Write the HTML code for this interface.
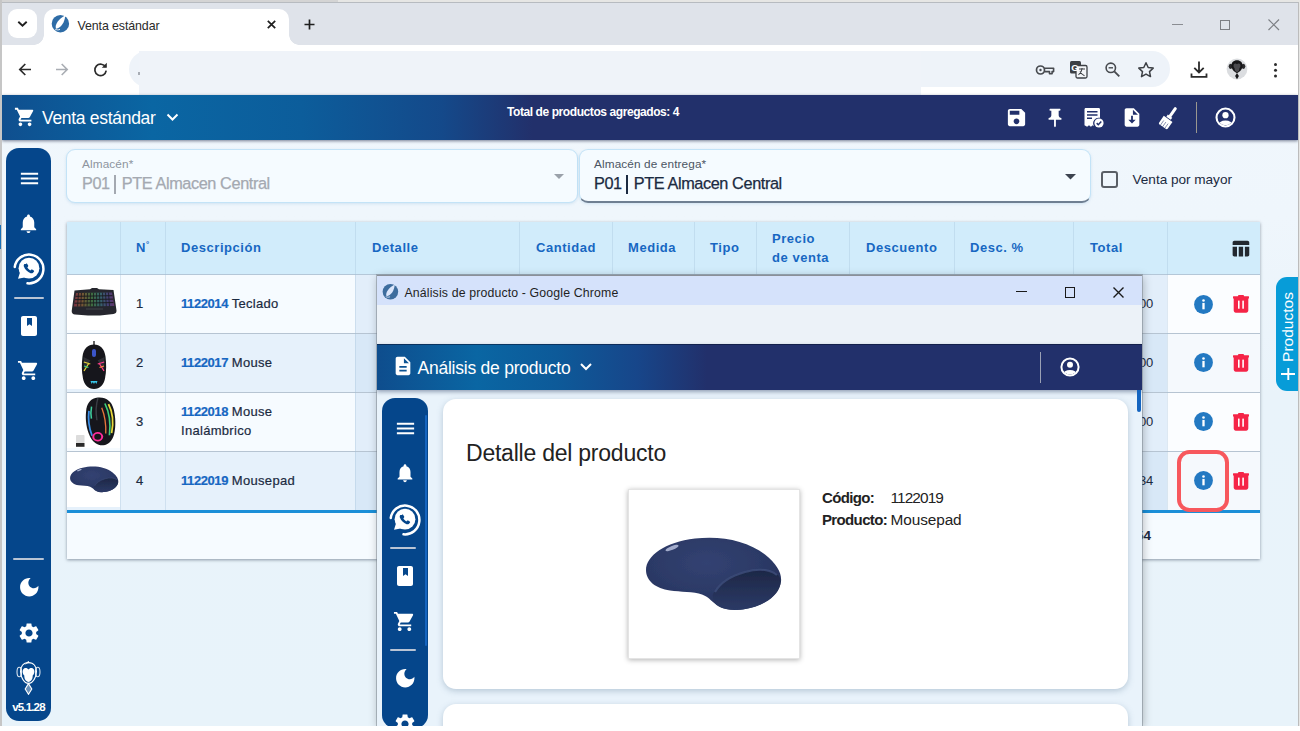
<!DOCTYPE html>
<html lang="es">
<head>
<meta charset="utf-8">
<title>Venta estándar</title>
<style>
*{box-sizing:border-box;margin:0;padding:0}
html,body{width:1300px;height:731px;overflow:hidden;background:#fff}
body{font-family:"Liberation Sans",sans-serif;position:relative;color:#1b2a41}
.abs{position:absolute}
svg{display:block;position:absolute}
#frame{left:0;top:0;width:1300px;height:731px;background:#fff}
#frameL{left:0;top:0;width:2px;height:726px;background:#c6c6c6}
#frameT{left:0;top:0;width:1300px;height:3.5px;background:linear-gradient(#e6e6e4 0,#e6e6e4 1.9px,#b7bbc0 2.1px,#b7bbc0 100%)}
#frameR{left:1297.6px;top:2px;width:2px;height:724px;background:linear-gradient(90deg,#bcbcbc 0,#bcbcbc 1.4px,#e6e6e4 1.5px)}
/* chrome */
#tabbar{left:2px;top:3px;width:1296px;height:42px;background:#dfe3ea}
#tabsearch{left:8px;top:9px;width:29px;height:29px;border-radius:9px;background:#fff}
#tab{left:44px;top:9px;width:245px;height:36px;background:#fff;border-radius:10px 10px 0 0}
#tab:before,#tab:after{content:"";position:absolute;bottom:0;width:10px;height:10px;background:radial-gradient(circle at 0 0,transparent 9.5px,#fff 10px)}
#tab:before{left:-10px}
#tab:after{right:-10px;background:radial-gradient(circle at 100% 0,transparent 9.5px,#fff 10px)}
#tabtitle{left:77.5px;top:18.5px;font-size:12.4px;color:#2a2a2a;white-space:nowrap;letter-spacing:-0.1px}
#toolbar{left:2px;top:45px;width:1296px;height:50px;background:#fff;border-radius:9px 9px 0 0}
#omni{left:129px;top:51px;width:1041px;height:36px;border-radius:18px;background:#eef3f9}
#redact{left:139px;top:51px;width:782px;height:44px;background:#eff3f9}
/* app */
#app{left:2px;top:95px;width:1296px;height:631px;background:linear-gradient(180deg,#f0f7fc 0,#eff6fc 120px,#e9f3fa 300px,#e8f3fa 100%);overflow:hidden}
#hdr{left:2px;top:95px;width:1296px;height:45px;background:linear-gradient(90deg,#0f4f8f 0px,#0a66a3 150px,#0c5d9b 300px,#14498a 440px,#22306b 530px,#22306b 100%);box-shadow:0 1px 3px rgba(15,25,60,.55)}
#hdrtitle{left:42px;top:107.9px;font-size:17.5px;color:#fff;white-space:nowrap;letter-spacing:-0.3px}
#hdrtotal{left:507px;top:104.5px;font-size:12px;font-weight:bold;color:#fff;white-space:nowrap;letter-spacing:-0.42px}
.side{background:#05468b;border-radius:13px}
#side1{left:6px;top:148px;width:45px;height:573px}
.sdiv{height:2px;background:#b9c4d4;border-radius:1px}
#ver{left:6px;top:701px;width:45px;text-align:center;font-size:11.5px;font-weight:bold;color:#fff;letter-spacing:-0.85px}
/* selects */
.sel{background:#f5fbff;border:1px solid #c3e3f7;border-radius:9px;box-shadow:0 1px 3px rgba(120,170,210,.25)}
#sel1{left:66px;top:149px;width:512px;height:54px}
#sel2{left:579px;top:149px;width:512px;height:54px;border-bottom:2px solid #6f7f92}
.lab{font-size:11.8px;white-space:nowrap;letter-spacing:0.11px}
.val{font-size:16.3px;white-space:nowrap;letter-spacing:-0.4px;-webkit-text-stroke:0.25px currentColor}
#chk{left:1101px;top:171px;width:17px;height:17px;border:2px solid #5a5f66;border-radius:3px}
#chklab{left:1132.5px;top:172px;font-size:13.6px;color:#1b2a41;white-space:nowrap;letter-spacing:-0.02px}
/* table */
#tbl{left:67px;top:222px;width:1193px;height:337px;background:#f6fbff;box-shadow:0 1px 3px rgba(60,75,95,.55)}
#thead{left:0;top:0;width:1193px;height:53px;background:#d1ecfb;border-bottom:1px solid #b4c7d8}
.th{position:absolute;font-weight:bold;color:#1767c2;font-size:13px;letter-spacing:0.55px;white-space:nowrap;line-height:19px}
.vd{position:absolute;top:0;width:1px;height:288px;background:rgba(160,190,215,.32)}
.row{position:absolute;left:0;width:1193px;height:59px;border-bottom:1px solid #b6c4d2}
.act{position:absolute;left:1100px;top:0;width:93px;height:58px;background:rgba(255,255,255,.58)}
.row.alt{background:#e6f1fb}
.det{position:absolute;left:288px;top:0;width:812px;height:58px;background:rgba(190,215,240,.35)}
.imgc{position:absolute;left:0;top:0px;width:53px;height:55px;background:#fff}
.num{position:absolute;left:69px;font-size:13px;color:#1b2a41;-webkit-text-stroke:0.2px currentColor}
.desc{position:absolute;left:114px;font-size:13px;color:#1b2a41;white-space:nowrap;line-height:19px;letter-spacing:0.3px;-webkit-text-stroke:0.2px currentColor}
.desc b{color:#1767c2;letter-spacing:-0.42px}
.tot{position:absolute;left:1072px;font-size:13px;color:#1b2a41;letter-spacing:-0.2px}
#blueline{left:0;top:288px;width:1193px;height:3px;background:#1b8fd8}
#prodtab{left:1276px;top:277px;width:24px;height:114.400px;background:#079cd8;border-radius:11px 0 0 11px}
#prodtxt{left:1198.2px;top:317.2px;width:180px;height:20px;line-height:20px;text-align:center;transform:rotate(-90deg);color:#fff;font-size:15.5px;white-space:nowrap}
#hl{left:1176.5px;top:450px;width:52.8px;height:61.7px;border:4.3px solid #f7585d;border-radius:12.5px}
</style>
</head>
<body>
<div id="frame" class="abs"></div>
<div id="frameT" class="abs"></div>
<div class="abs" style="left:0;top:0;width:338px;height:2px;background:#d4d4d4"></div>
<!-- ===== browser chrome ===== -->
<div id="tabbar" class="abs"></div>
<div id="tabsearch" class="abs"></div>
<div id="tab" class="abs"></div>
<div id="tabtitle" class="abs">Venta estándar</div>
<div id="toolbar" class="abs"></div>
<div id="omni" class="abs"></div>
<div id="redact" class="abs"></div>
<svg style="left:17px;top:20px" width="11" height="8" viewBox="0 0 11 8"><path d="M1.300 1.800l4.200 4 4.200-4" stroke="#1f1f1f" stroke-width="1.900" fill="none"/></svg>
<!-- favicon -->
<svg style="left:51px;top:14px" width="19" height="19" viewBox="0 0 19 19"><circle cx="9.400" cy="9.700" r="8.700" fill="#2e6ca6"/><g transform="translate(9.600 8.600) rotate(-50.500)"><path fill="#fff" d="M-7.600 .5C-6-3.500 2-3.700 8.300-.9 3 3.100-4 3.900-7.600 .5z"/></g><path d="M4.200 15.200c1.500.8 3.200.9 4.800.2" stroke="#fff" stroke-width=".9" fill="none"/></svg>
<svg style="left:267px;top:20px" width="9" height="9" viewBox="0 0 9 9"><path d="M.8.800l7.400 7.400M8.200.8L.8 8.200" stroke="#1f1f1f" stroke-width="1.700" fill="none"/></svg>
<svg style="left:304px;top:19px" width="11" height="11" viewBox="0 0 11 11"><path d="M5.500.5v10M.5 5.500h10" stroke="#1f1f1f" stroke-width="1.700" fill="none"/></svg>
<!-- window controls -->
<div class="abs" style="left:1172px;top:23.500px;width:10.500px;height:1.200px;background:#8a8d92"></div>
<div class="abs" style="left:1219.500px;top:19.500px;width:10.500px;height:10.500px;border:1.200px solid #7c7f84"></div>
<svg style="left:1268px;top:19px" width="11.500" height="11.500" viewBox="0 0 11.500 11.500"><path d="M.5.500l10.500 10.500M11 .5L.5 11" stroke="#7c7f84" stroke-width="1.200" fill="none"/></svg>
<!-- nav -->
<svg style="left:17px;top:61px" width="16" height="17" viewBox="0 0 16 17"><path d="M14 8.500H2.800M8.300 3l-5.500 5.500 5.500 5.500" stroke="#2b2b2b" stroke-width="1.700" fill="none"/></svg>
<svg style="left:54px;top:61px" width="16" height="17" viewBox="0 0 16 17"><path d="M2 8.500h11.200M7.700 3l5.500 5.500-5.500 5.500" stroke="#a9adb3" stroke-width="1.600" fill="none"/></svg>
<svg style="left:92px;top:61px" width="17" height="17" viewBox="0 0 17 17"><path d="M13.600 6.200A5.700 5.700 0 1 0 14.200 9.700" stroke="#2b2b2b" stroke-width="1.700" fill="none"/><path d="M14.800 1.800v5h-5z" fill="#2b2b2b"/></svg>
<div class="abs" style="left:138px;top:72px;width:2px;height:3px;background:#a8adb5"></div>
<!-- omnibox right icons -->
<svg style="left:1035px;top:62px" width="20" height="16" viewBox="0 0 20 16"><circle cx="5.500" cy="8" r="4" fill="none" stroke="#474a4f" stroke-width="1.700"/><circle cx="5.500" cy="8" r="1.200" fill="#474a4f"/><path d="M9.300 6.300h9.300v3.300h-1.500v2.200h-2.600V9.600H9.300" fill="none" stroke="#474a4f" stroke-width="1.600" stroke-linejoin="round"/></svg>
<svg style="left:1069px;top:60px" width="19" height="19" viewBox="0 0 19 19"><rect x="1" y="1" width="11" height="12.500" rx="1.500" fill="#3d4045"/><rect x="7" y="5.500" width="11" height="12.500" rx="1.500" fill="#f3f5f8" stroke="#3d4045" stroke-width="1.300"/><text x="2.300" y="10.700" font-family="Liberation Sans" font-size="9.500" font-weight="bold" fill="#fff">G</text><path d="M10 9h6M13 8v1c-.3 2.300-1.700 4.300-3.500 5.800M11 11.500c.8 1.600 2.300 3.200 4.500 4.300" stroke="#3d4045" stroke-width="1.100" fill="none"/></svg>
<svg style="left:1104px;top:61px" width="17" height="17" viewBox="0 0 17 17"><circle cx="6.800" cy="6.800" r="4.700" fill="none" stroke="#474a4f" stroke-width="1.600"/><path d="M10.300 10.300l5 5" stroke="#474a4f" stroke-width="1.900"/><path d="M4.600 6.800h4.400" stroke="#474a4f" stroke-width="1.400"/></svg>
<svg style="left:1137px;top:61px" width="18" height="17" viewBox="0 0 18 17"><path d="M9 1.800l2.200 4.700 5 .6-3.700 3.500 1 5L9 13.100l-4.500 2.500 1-5L1.800 7.100l5-.6z" fill="none" stroke="#3d4045" stroke-width="1.500" stroke-linejoin="round"/></svg>
<svg style="left:1189px;top:60px" width="20" height="19" viewBox="0 0 20 19"><path d="M10 1.500v10.500M5.300 7.800l4.700 4.700 4.700-4.700M2.500 13.500v3.300h15v-3.300" stroke="#2b2b2b" stroke-width="1.800" fill="none"/></svg>
<!-- avatar -->
<svg style="left:1226px;top:58px" width="22" height="22" viewBox="0 0 22 22"><circle cx="11" cy="11" r="10.400" fill="#dbdde0"/><ellipse cx="4.600" cy="8.300" rx="1.900" ry="2.600" fill="#2a2a2c"/><ellipse cx="17.400" cy="8.300" rx="1.900" ry="2.600" fill="#2a2a2c"/><path fill="#161618" d="M11 2.300c3.500 0 5.600 2.300 5.600 5.300 0 3.200-2.300 6.300-5.600 7.700-3.300-1.400-5.600-4.500-5.600-7.700 0-3 2.100-5.300 5.600-5.300z"/><path fill="#4a4a4e" d="M11 6.300c.8-1.200 2.400-1.200 3.100-.1.900 1.500.1 3.200-.7 4 0 2.200-1 3.700-2.400 3.700s-2.400-1.500-2.400-3.700c-.8-.8-1.600-2.500-.7-4 .7-1.100 2.300-1.100 3.100.1z"/><path fill="#161618" d="M11 15l1.900 3-1.900 3.300L9.100 18z"/></svg>
<div class="abs" style="left:1273.500px;top:62.500px;width:3.200px;height:3.200px;border-radius:50%;background:#2b2b2b;box-shadow:0 5.800px 0 #2b2b2b,0 11.600px 0 #2b2b2b"></div>
<!--CHROMEEND-->
<!-- ===== app ===== -->
<div id="app" class="abs"></div>
<!-- sidebar -->

<div id="side1" class="abs side"></div>
<svg style="left:18px;top:167px" width="23" height="23" viewBox="0 0 24 24"><path fill="#fff" d="M3 18h18v-2H3v2zm0-5h18v-2H3v2zm0-7v2h18V6H3z"/></svg>
<svg style="left:17.400px;top:212px" width="23" height="23" viewBox="0 0 24 24"><path fill="#fff" d="M12 22c1.1 0 2-.9 2-2h-4c0 1.1.89 2 2 2zm6-6v-5c0-3.070-1.640-5.640-4.500-6.320V4c0-.830-.670-1.500-1.500-1.500s-1.500.670-1.500 1.500v.680C7.630 5.360 6 7.920 6 11v5l-2 2v1h16v-1l-2-2z"/></svg>
<svg style="left:12.800px;top:253.400px" width="32" height="32" viewBox="0 0 32 32"><path fill="none" stroke="#fff" stroke-width="2.500" stroke-linecap="round" d="M1.740 14A14.400 14.400 0 1 1 14.500 30.300"/><circle cx="16" cy="15.200" r="10.400" fill="#fff"/><path fill="#fff" d="M5 25.800l2.600-8.300 6.800 6.600z"/><g transform="translate(-1.100 -1.300) scale(1.050)"><path fill="#05468b" d="M13.300 11.600c.4-.4 1-.4 1.300.1l.9 1.500c.2.400.1.800-.2 1.100l-.6.600c.6 1.300 1.600 2.300 2.900 2.900l.6-.6c.3-.3.700-.4 1.100-.2l1.500.9c.5.300.5.900.1 1.300l-.8.800c-.6.600-1.500.8-2.300.5-3-1.100-5.300-3.400-6.400-6.400-.3-.8-.1-1.700.5-2.300z"/></g></svg>
<div class="abs sdiv" style="left:14px;top:297px;width:30px"></div>
<svg style="left:17.100px;top:314.300px" width="24" height="24" viewBox="0 0 24 24"><path fill="#fff" d="M18 2H6c-1.100 0-2 .900-2 2v16c0 1.100.900 2 2 2h12c1.100 0 2-.900 2-2V4c0-1.100-.900-2-2-2zM10 4h5v8l-2.500-1.800L10 12V4z"/></svg>
<svg style="left:17px;top:359px" width="23" height="23" viewBox="0 0 24 24"><path fill="#fff" d="M7 18c-1.100 0-1.990.900-1.990 2S5.900 22 7 22s2-.900 2-2-.900-2-2-2zM1 2v2h2l3.600 7.590-1.350 2.450c-.160.280-.250.610-.250.960 0 1.100.900 2 2 2h12v-2H7.420c-.140 0-.250-.110-.250-.250l.030-.120.900-1.630h7.450c.750 0 1.410-.410 1.750-1.030l3.580-6.490c.080-.140.120-.310.120-.480 0-.550-.450-1-1-1H5.210l-.940-2H1zm16 16c-1.100 0-1.990.900-1.990 2s.890 2 1.990 2 2-.900 2-2-.900-2-2-2z"/></svg>
<div class="abs sdiv" style="left:13px;top:558px;width:31px"></div>
<svg style="left:16.700px;top:574.600px" width="24.500" height="24.500" viewBox="0 0 24 24"><path fill="#fff" d="M12 3c-4.970 0-9 4.030-9 9s4.030 9 9 9 9-4.030 9-9c0-.460-.040-.920-.100-1.360-.980 1.370-2.580 2.260-4.400 2.260-2.980 0-5.400-2.420-5.400-5.400 0-1.810.890-3.420 2.260-4.400-.440-.060-.900-.100-1.360-.100z"/></svg>
<svg style="left:17.100px;top:620.700px" width="24" height="24" viewBox="0 0 24 24"><path fill="#fff" d="M19.140 12.940c.040-.300.060-.610.060-.940 0-.320-.020-.640-.070-.940l2.030-1.580c.180-.140.230-.410.120-.610l-1.920-3.320c-.120-.220-.370-.290-.590-.220l-2.390.960c-.500-.380-1.030-.700-1.620-.940l-.360-2.540c-.040-.240-.240-.410-.480-.410h-3.840c-.240 0-.430.170-.470.410l-.360 2.540c-.590.240-1.130.570-1.620.940l-2.390-.960c-.220-.080-.470 0-.590.220L2.740 8.870c-.120.210-.080.470.120.610l2.030 1.580c-.050.300-.090.630-.090.940s.020.640.070.940l-2.030 1.580c-.180.140-.230.410-.120.610l1.920 3.320c.120.220.370.290.590.220l2.390-.960c.500.380 1.030.700 1.620.940l.360 2.540c.050.240.240.410.480.410h3.840c.240 0 .440-.170.470-.410l.360-2.540c.590-.240 1.130-.560 1.620-.940l2.390.960c.220.080.470 0 .590-.220l1.920-3.320c.120-.220.070-.470-.120-.610l-2.010-1.580zM12 15.600c-1.980 0-3.600-1.620-3.600-3.600s1.620-3.600 3.600-3.600 3.600 1.620 3.600 3.600-1.620 3.600-3.600 3.600z"/></svg>
<!-- monkey logo -->
<svg style="left:16px;top:661px" width="25" height="34" viewBox="0 0 25 34"><g fill="none" stroke="#fff"><ellipse cx="3.300" cy="11" rx="2.300" ry="4.700" stroke-width="1.100" opacity=".85"/><ellipse cx="21.700" cy="11" rx="2.300" ry="4.700" stroke-width="1.100" opacity=".85"/><path stroke-width="1.250" d="M12.500 1.700C18 1.700 20.400 6 20.400 10.500 20.400 16 17 22.400 12.500 22.400 8 22.400 4.600 16 4.600 10.500 4.600 6 7 1.700 12.500 1.700z"/><path stroke-width="1" d="M9.500 3l3-2.600-.6 2"/><path stroke-width="1.100" d="M12.500 22.600L9.200 28l3.300 5.300L15.800 28z" fill="rgba(255,255,255,.4)"/></g><path fill="#fff" d="M12.500 8.600C11.500 6.600 8.500 6.200 7.300 8.300 6 10.500 7 13.500 8.300 14.600 8.300 18.500 10 20.900 12.500 20.900 15 20.900 16.700 18.500 16.700 14.600 18 13.500 19 10.500 17.700 8.300 16.500 6.200 13.500 6.600 12.500 8.600z"/></svg>
<div id="ver" class="abs">v5.1.28</div>
<!-- selects -->
<div id="sel1" class="abs sel"></div>
<div class="abs lab" style="left:82px;top:157px;color:#8d949e">Almacén*</div>
<div class="abs val" style="left:82px;top:174px;color:#a4a9b1">P01<span style="display:inline-block;width:1.700px;height:18.500px;background:currentColor;vertical-align:-4.500px;margin:0 6px 0 4.300px"></span>PTE Almacen Central</div>
<svg style="left:554px;top:174px" width="10" height="5" viewBox="0 0 10 5"><path fill="#9aa1aa" d="M0 0h10L5 5z"/></svg>
<div id="sel2" class="abs sel"></div>
<div class="abs lab" style="left:594px;top:157px;color:#4b5563">Almacén de entrega*</div>
<div class="abs val" style="left:594px;top:174px;color:#1b2a41">P01<span style="display:inline-block;width:1.700px;height:18.500px;background:currentColor;vertical-align:-4.500px;margin:0 6px 0 4.300px"></span>PTE Almacen Central</div>
<svg style="left:1065px;top:174px" width="11" height="5.500" viewBox="0 0 10 5"><path fill="#3d4450" d="M0 0h10L5 5z"/></svg>
<div id="chk" class="abs"></div>
<div id="chklab" class="abs">Venta por mayor</div>
<!-- table -->
<div id="tbl" class="abs">
 <div id="thead" class="abs"></div>
 <div class="th" style="left:69px;top:16px">N<span style="font-size:8px;position:relative;top:-5px">°</span></div>
 <div class="th" style="left:114px;top:16px">Descripción</div>
 <div class="th" style="left:305px;top:16px">Detalle</div>
 <div class="th" style="left:469px;top:16px">Cantidad</div>
 <div class="th" style="left:561px;top:16px">Medida</div>
 <div class="th" style="left:643px;top:16px">Tipo</div>
 <div class="th" style="left:705px;top:7px">Precio<br>de venta</div>
 <div class="th" style="left:799px;top:16px">Descuento</div>
 <div class="th" style="left:903px;top:16px">Desc. %</div>
 <div class="th" style="left:1023px;top:16px">Total</div>
 <svg style="left:1163px;top:16px" width="21" height="21" viewBox="0 0 24 24"><path fill="#23282f" d="M10 10.020h5V21h-5zM17 21h3c1.100 0 2-.900 2-2v-9h-5v11zm3-18H5c-1.100 0-2 .900-2 2v3h19V5c0-1.100-.900-2-2-2zM3 19c0 1.100.900 2 2 2h3V10H3v9z"/></svg>
 <!-- rows -->
 <div class="row" style="top:53px"><div class="det"></div><div class="act"></div><div class="imgc"></div><div class="num" style="top:21px">1</div><div class="desc" style="top:19px"><b>1122014</b> Teclado</div><div class="tot" style="top:21px">00</div></div>
 <div class="row alt" style="top:112px"><div class="det"></div><div class="act"></div><div class="imgc"></div><div class="num" style="top:21px">2</div><div class="desc" style="top:19px"><b>1122017</b> Mouse</div><div class="tot" style="top:21px">00</div></div>
 <div class="row" style="top:171px"><div class="det"></div><div class="act"></div><div class="imgc"></div><div class="num" style="top:21px">3</div><div class="desc" style="top:9px"><b>1122018</b> Mouse<br>Inalámbrico</div><div class="tot" style="top:21px">00</div></div>
 <div class="row alt" style="top:230px;height:58px;border-bottom:none"><div class="det"></div><div class="act"></div><div class="imgc"></div><div class="num" style="top:21px">4</div><div class="desc" style="top:19px"><b>1122019</b> Mousepad</div><div class="tot" style="top:21px">34</div></div>
 <div class="vd" style="left:53px"></div><div class="vd" style="left:98px"></div><div class="vd" style="left:288px"></div>
 <div class="vd" style="left:452px;height:52px"></div><div class="vd" style="left:545px;height:52px"></div><div class="vd" style="left:627px;height:52px"></div><div class="vd" style="left:689px;height:52px"></div><div class="vd" style="left:782px;height:52px"></div><div class="vd" style="left:887px;height:52px"></div><div class="vd" style="left:1006px;height:52px"></div><div class="vd" style="left:1100px"></div>
 <div id="blueline" class="abs"></div>
 <div class="abs" style="left:1069px;top:306px;font-size:13.500px;font-weight:bold;color:#1b2a41">54</div>
 <svg style="left:1126.5px;top:72.5px" width="19" height="19" viewBox="0 0 19 19"><circle cx="9.500" cy="9.500" r="9.400" fill="#2379c2"/><rect x="8.350" y="7.900" width="2.300" height="6.400" fill="#fff"/><circle cx="9.500" cy="5.500" r="1.300" fill="#fff"/></svg><svg style="left:1166.4px;top:73.2px" width="16" height="18" viewBox="0 0 16 18"><path fill="#f52447" d="M5.500 0h5l.7 1.200H15.500c.3 0 .5.200.5.500V3.400H0V1.700c0-.3.200-.5.500-.5h4.300zM.7 3.400h14.600V15.600c0 1.200-.9 2.100-2.100 2.100H2.800c-1.200 0-2.100-.9-2.100-2.100z"/><rect x="5" y="5.400" width="1.600" height="8.400" rx=".5" fill="#fff"/><rect x="9.300" y="5.400" width="1.600" height="8.400" rx=".5" fill="#fff"/></svg><svg style="left:1126.5px;top:131.3px" width="19" height="19" viewBox="0 0 19 19"><circle cx="9.500" cy="9.500" r="9.400" fill="#2379c2"/><rect x="8.350" y="7.900" width="2.300" height="6.400" fill="#fff"/><circle cx="9.500" cy="5.500" r="1.300" fill="#fff"/></svg><svg style="left:1166.4px;top:132.0px" width="16" height="18" viewBox="0 0 16 18"><path fill="#f52447" d="M5.500 0h5l.7 1.200H15.500c.3 0 .5.200.5.500V3.400H0V1.700c0-.3.200-.5.500-.5h4.300zM.7 3.400h14.600V15.600c0 1.200-.9 2.100-2.100 2.100H2.800c-1.200 0-2.100-.9-2.100-2.100z"/><rect x="5" y="5.400" width="1.600" height="8.400" rx=".5" fill="#fff"/><rect x="9.300" y="5.400" width="1.600" height="8.400" rx=".5" fill="#fff"/></svg><svg style="left:1126.5px;top:190.1px" width="19" height="19" viewBox="0 0 19 19"><circle cx="9.500" cy="9.500" r="9.400" fill="#2379c2"/><rect x="8.350" y="7.900" width="2.300" height="6.400" fill="#fff"/><circle cx="9.500" cy="5.500" r="1.300" fill="#fff"/></svg><svg style="left:1166.4px;top:190.8px" width="16" height="18" viewBox="0 0 16 18"><path fill="#f52447" d="M5.500 0h5l.7 1.200H15.500c.3 0 .5.200.5.500V3.400H0V1.700c0-.3.200-.5.500-.5h4.300zM.7 3.400h14.600V15.600c0 1.200-.9 2.100-2.100 2.100H2.800c-1.200 0-2.100-.9-2.100-2.100z"/><rect x="5" y="5.400" width="1.600" height="8.400" rx=".5" fill="#fff"/><rect x="9.300" y="5.400" width="1.600" height="8.400" rx=".5" fill="#fff"/></svg><svg style="left:1126.5px;top:249.4px" width="19" height="19" viewBox="0 0 19 19"><circle cx="9.500" cy="9.500" r="9.400" fill="#2379c2"/><rect x="8.350" y="7.900" width="2.300" height="6.400" fill="#fff"/><circle cx="9.500" cy="5.500" r="1.300" fill="#fff"/></svg><svg style="left:1166.4px;top:250.1px" width="16" height="18" viewBox="0 0 16 18"><path fill="#f52447" d="M5.500 0h5l.7 1.200H15.500c.3 0 .5.200.5.500V3.400H0V1.700c0-.3.200-.5.500-.5h4.300zM.7 3.400h14.600V15.600c0 1.200-.9 2.100-2.100 2.100H2.800c-1.200 0-2.100-.9-2.100-2.100z"/><rect x="5" y="5.400" width="1.600" height="8.400" rx=".5" fill="#fff"/><rect x="9.300" y="5.400" width="1.600" height="8.400" rx=".5" fill="#fff"/></svg><!--ROWICONSEND-->
 
<!-- keyboard -->
<svg style="left:3px;top:65px" width="48" height="30" viewBox="0 0 48 30"><defs><linearGradient id="kb" x1="0" x2="1"><stop offset="0" stop-color="#b0344e"/><stop offset=".22" stop-color="#a8763a"/><stop offset=".45" stop-color="#4c9a4e"/><stop offset=".65" stop-color="#3f8a93"/><stop offset=".85" stop-color="#5a4fa6"/><stop offset="1" stop-color="#8a3f8f"/></linearGradient><filter id="b1"><feGaussianBlur stdDeviation=".45"/></filter></defs><g filter="url(#b1)"><path d="M4.500 3.500L20 2.300l2-1.300h5l2 1.300L43.500 3l3 20.500c.2 2-1 3.200-3 3.500L30 28.600H18L5 27.500c-2-.2-3.500-1.500-3.300-3.500z" fill="#26282d"/><path d="M6 6l36-.6L44.300 19 3.800 19.600z" fill="url(#kb)" opacity=".6"/><path d="M5.500 9.300l37-.6M5 12.700l38-.6M4.500 16.200l39-.6" stroke="#1b1c20" stroke-width="1" fill="none"/><path d="M8.500 6l-1 13.500M11.500 6l-.8 13.500M14.500 6l-.6 13.500M17.500 6l-.4 13.500M20.500 5.800l-.2 13.700M23.500 5.800v13.700M26.500 5.800l.2 13.700M29.500 5.700l.4 13.700M32.500 5.700l.6 13.700M35.500 5.600l.8 13.700M38.500 5.600l1 13.700" stroke="#1b1c20" stroke-width=".8" fill="none"/><path d="M16 22h17" stroke="#3a3d44" stroke-width="1.200"/></g></svg>
<!-- mouse 1 -->
<svg style="left:12px;top:118px" width="30" height="52" viewBox="0 0 30 52"><defs><filter id="b2"><feGaussianBlur stdDeviation=".55"/></filter></defs><g filter="url(#b2)"><path d="M15 1v5" stroke="#222" stroke-width="1.400"/><path d="M15 4.500c6 0 10.500 4 11.500 12 .9 7 1 15-.5 22-1.200 6-5 10.500-11 10.500S5.200 44.500 4 38.500c-1.500-7-1.400-15-.5-22C4.500 8.500 9 4.500 15 4.500z" fill="#15161a"/><path d="M4.500 17l7 3.500-6.500 9zM25.500 17l-7 3.500 6.500 9z" fill="#2d2f36"/><path d="M4.800 22l6.500 2M5 31l5-8" stroke="#e6d23a" stroke-width="1.300"/><path d="M5 26l4.500 1.500" stroke="#3fd07a" stroke-width="1.300"/><path d="M25.200 22l-6.500 2M25 31l-5-8" stroke="#ff3d8a" stroke-width="1.300"/><path d="M25 26l-4.500 1.500" stroke="#ff8a3d" stroke-width="1.300"/><rect x="13" y="9" width="4" height="8" rx="2" fill="#3b55c9"/><path d="M11.500 41h7l-1.200 3-1.200-2-1.100 2-1.200-2-1.100 2z" fill="#39c6e8"/></g></svg>
<!-- mouse 2 -->
<svg style="left:5.500px;top:174px" width="46" height="56" viewBox="0 0 46 56"><defs><filter id="b3"><feGaussianBlur stdDeviation=".5"/></filter></defs><g filter="url(#b3)"><g transform="rotate(-5 27 26) translate(27 0) scale(1.180 1) translate(-22 0)"><path d="M22 1.500c7 0 11.500 5 12.500 13 1 8 .8 17-1.500 25-1.800 6-5.500 10-10 10s-8.500-4-10.500-10c-2.500-8-2.800-17-1.500-25C12 6.500 16 1.500 22 1.500z" fill="#17181c"/><path d="M22 2c-2 6-3 14-2.500 22" stroke="#3a3c44" stroke-width="1.200" fill="none"/><path d="M30.500 9c2.800 8 3 19 .5 29" stroke="#e8d83a" stroke-width="1.500" fill="none"/><path d="M27.500 8c3 9 3.500 21 1.500 32" stroke="#3fd07a" stroke-width="1.400" fill="none"/><path d="M24.500 12c2 8 2.500 17 1.500 26" stroke="#e8763a" stroke-width="1.100" fill="none"/><path d="M13.500 14c-1.500 8-1.200 17 .8 25" stroke="#3b8fe8" stroke-width="1.500" fill="none"/><path d="M16 10c-1 4-1.300 8-1 12" stroke="#3fd0a0" stroke-width="1.300" fill="none"/><circle cx="19" cy="40.500" r="3.800" fill="none" stroke="#ff2d9a" stroke-width="1.700"/></g><rect x="3" y="39" width="8.500" height="8" rx=".8" fill="#dcdcdc"/><rect x="3" y="47" width="8.500" height="3.800" fill="#2a2a2a"/></g></svg>
<!-- mousepad small -->
<svg style="left:2px;top:241px" width="50" height="32" viewBox="0 0 140 78"><use href="#padshape"/></svg>
<!--PRODIMGSEND-->
</div>
<div id="prodtab" class="abs"></div>
<div id="prodtxt" class="abs">Productos</div>
<svg style="left:1280.500px;top:367.500px" width="14" height="12" viewBox="0 0 14 12"><path d="M7.300 0v12M0 6h14" stroke="#fff" stroke-width="1.900" fill="none"/></svg>
<!--MAINEND-->
<div id="hdr" class="abs"></div>
<div id="hdrtitle" class="abs">Venta estándar</div>
<div id="hdrtotal" class="abs">Total de productos agregados: 4</div>
<svg style="left:14px;top:106px" width="22" height="22" viewBox="0 0 24 24"><path fill="#fff" d="M7 18c-1.100 0-1.990.900-1.990 2S5.900 22 7 22s2-.900 2-2-.900-2-2-2zM1 2v2h2l3.600 7.590-1.350 2.450c-.160.280-.250.610-.250.960 0 1.100.900 2 2 2h12v-2H7.420c-.140 0-.250-.110-.250-.250l.030-.120.900-1.630h7.450c.750 0 1.410-.410 1.750-1.030l3.580-6.490c.080-.140.120-.310.120-.480 0-.550-.450-1-1-1H5.210l-.940-2H1zm16 16c-1.100 0-1.990.900-1.990 2s.890 2 1.990 2 2-.900 2-2-.900-2-2-2z"/></svg>
<svg style="left:166px;top:113px" width="13" height="9" viewBox="0 0 13 9"><path d="M1.500 1.500l5 5 5-5" stroke="#fff" stroke-width="2" fill="none"/></svg>
<!-- save -->
<svg style="left:1005px;top:106px" width="23" height="23" viewBox="0 0 24 24"><path fill="#fff" d="M17 3H5c-1.110 0-2 .900-2 2v14c0 1.100.890 2 2 2h14c1.100 0 2-.900 2-2V7l-4-4zm-5 16c-1.660 0-3-1.340-3-3s1.340-3 3-3 3 1.340 3 3-1.340 3-3 3zm3-10H5V5h10v4z"/></svg>
<!-- pin -->
<svg style="left:1044px;top:107px" width="22" height="22" viewBox="0 0 24 24"><path fill="#fff" d="M16 9V4h1c.550 0 1-.450 1-1s-.450-1-1-1H7c-.550 0-1 .450-1 1s.450 1 1 1h1v5c0 1.660-1.340 3-3 3v2h5.970v7l1 1 1-1v-7H19v-2c-1.660 0-3-1.340-3-3z"/></svg>
<!-- receipt check -->
<svg style="left:1083px;top:107px" width="22" height="22" viewBox="0 0 22 22"><path fill="#fff" d="M1.500 2.500c0-.8.600-1.400 1.400-1.400h12.700c.8 0 1.400.6 1.400 1.400v8.300a5.600 5.600 0 0 0-6 8.400l-1.200-.9-1.900 1.500-1.900-1.500-1.900 1.500-2.600-1.600z"/><path stroke="#22306b" stroke-width="1.500" d="M4 4.800h10.500M4 8h10.500M4 11.200h5"/><circle cx="16" cy="16" r="4.600" fill="#fff"/><path d="M13.700 16.100l1.600 1.600 3-3.100" stroke="#22306b" stroke-width="1.500" fill="none"/></svg>
<!-- file download -->
<svg style="left:1121px;top:106px" width="22" height="23" viewBox="0 0 24 24"><path fill="#fff" d="M14 2H6c-1.100 0-1.990.900-1.990 2L4 20c0 1.100.890 2 1.990 2H18c1.100 0 2-.900 2-2V8l-6-6zm-2 16.500l-4-4h3V10h2v4.500h3l-4 4zM13 9V3.500L18.500 9H13z"/></svg>
<!-- brush -->
<svg style="left:1158px;top:105px" width="24" height="26" viewBox="0 0 24 26"><g transform="translate(9.900 14.200) rotate(35)" fill="#fff"><rect x="-1.500" y="-14.400" width="3" height="11.800" rx="1.500"/><rect x="-2.700" y="-3.700" width="5.400" height="2.500"/><path d="M-5.300-.4h10.600v8c0 .9-.7 1.600-1.600 1.600h-7.400c-.9 0-1.600-.7-1.600-1.600z"/><path d="M-2.700 3.500v5.700M0 3.500v5.700M2.700 3.500v5.700" stroke="#22306b" stroke-width=".7" opacity=".7"/></g></svg>
<div class="abs" style="left:1196.300px;top:102px;width:1px;height:31px;background:#9a978f"></div>
<svg style="left:1214px;top:106px" width="23" height="23" viewBox="0 0 22 22"><defs><clipPath id="acp2"><circle cx="11" cy="11" r="7.500"/></clipPath></defs><circle cx="11" cy="11" r="8.600" fill="none" stroke="#fff" stroke-width="2"/><circle cx="11" cy="8.800" r="3" fill="#fff"/><ellipse cx="11" cy="18.500" rx="7" ry="4.600" fill="#fff" clip-path="url(#acp2)"/></svg>
<!--HDREND-->
<div id="hl" class="abs"></div>
<!-- ===== popup window ===== -->
<div id="pop" class="abs" style="left:377px;top:275px;width:765px;height:451px;background:#e9f3fb;box-shadow:0 0 0 1px rgba(120,130,140,.5),1px 2px 9px rgba(0,0,0,.28);overflow:hidden">
 <div class="abs" style="left:0;top:0;width:765px;height:1px;background:#8b9098"></div>
 <div class="abs" style="left:0;top:1px;width:765px;height:29px;background:#d5e2fb"></div>
 <div class="abs" style="left:0;top:30px;width:765px;height:39px;background:#ecf2f8"></div>
 <div class="abs" style="left:0;top:68.500px;width:765px;height:1px;background:rgba(10,20,50,.55);z-index:1"></div>
 <div class="abs" style="left:27.500px;top:11px;font-size:12.300px;color:#1f1f1f;white-space:nowrap;letter-spacing:0.15px">Análisis de producto - Google Chrome</div>
<svg style="left:5px;top:7.500px" width="17" height="17" viewBox="0 0 19 19"><circle cx="9.400" cy="9.700" r="8.700" fill="#3d6d9e"/><g transform="translate(9.600 8.600) rotate(-50.500)"><path fill="#dbe6fb" d="M-7.600 .5C-6-3.500 2-3.700 8.300-.9 3 3.100-4 3.900-7.600 .5z"/></g><path d="M4.200 15.200c1.500.8 3.200.9 4.800.2" stroke="#dbe6fb" stroke-width=".9" fill="none"/></svg>
 <!-- win controls -->
 <div class="abs" style="left:639px;top:16.200px;width:10.500px;height:1.200px;background:#1a1a1a"></div>
 <div class="abs" style="left:687.500px;top:12px;width:10.500px;height:10.500px;border:1.300px solid #1a1a1a"></div>
 <svg style="left:736px;top:12px" width="11" height="11" viewBox="0 0 11 11"><path d="M.5.5l10 10M10.500.5l-10 10" stroke="#1a1a1a" stroke-width="1.400" fill="none"/></svg>
 <!-- header -->
 <div class="abs" style="left:0;top:69px;width:765px;height:46px;background:linear-gradient(90deg,#0e4d8d 0px,#0a66a3 100px,#0d5a99 180px,#17468a 260px,#22306b 330px,#22306b 100%);box-shadow:0 2px 4px rgba(20,40,80,.4)"></div>
 <svg style="left:15px;top:80px" width="22" height="22" viewBox="0 0 24 24"><path fill="#fff" d="M14 2H6c-1.100 0-1.990.900-1.990 2L4 20c0 1.100.890 2 1.990 2H18c1.100 0 2-.900 2-2V8l-6-6zm2 16H8v-2h8v2zm0-4H8v-2h8v2zm-3-5V3.500L18.500 9H13z"/></svg>
 <div class="abs" style="left:40.500px;top:82.700px;font-size:17.500px;color:#fff;white-space:nowrap;letter-spacing:-0.23px">Análisis de producto</div>
 <svg style="left:202.500px;top:88px" width="12" height="8" viewBox="0 0 12 8"><path d="M1 1l5 5 5-5" stroke="#fff" stroke-width="2" fill="none"/></svg>
 <div class="abs" style="left:663px;top:77px;width:1px;height:31px;background:#9aa0b4"></div>
 <svg style="left:682px;top:81px" width="22" height="22" viewBox="0 0 22 22"><defs><clipPath id="acp"><circle cx="11" cy="11" r="7.500"/></clipPath></defs><circle cx="11" cy="11" r="8.600" fill="none" stroke="#fff" stroke-width="2"/><circle cx="11" cy="8.800" r="3" fill="#fff"/><ellipse cx="11" cy="18.500" rx="7" ry="4.600" fill="#fff" clip-path="url(#acp)"/></svg>
 <!-- sidebar -->
 <div class="abs side" style="left:5px;top:123px;width:46px;height:330px"></div>
 <div class="abs" style="left:48px;top:140px;width:2px;height:231px;background:#1565c0;border-radius:1px"></div>
 <svg style="left:17px;top:142px" width="23" height="23" viewBox="0 0 24 24"><path fill="#fff" d="M3 18h18v-2H3v2zm0-5h18v-2H3v2zm0-7v2h18V6H3z"/></svg>
 <svg style="left:17px;top:187px" width="22" height="22" viewBox="0 0 24 24"><path fill="#fff" d="M12 22c1.100 0 2-.900 2-2h-4c0 1.100.890 2 2 2zm6-6v-5c0-3.070-1.640-5.640-4.500-6.320V4c0-.830-.670-1.500-1.500-1.500s-1.500.670-1.500 1.500v.680C7.630 5.360 6 7.920 6 11v5l-2 2v1h16v-1l-2-2z"/></svg>
 <svg style="left:12.300px;top:229px" width="32" height="32" viewBox="0 0 32 32"><path fill="none" stroke="#fff" stroke-width="2.500" stroke-linecap="round" d="M1.740 14A14.400 14.400 0 1 1 14.500 30.300"/><circle cx="16" cy="15.200" r="10.400" fill="#fff"/><path fill="#fff" d="M5 25.800l2.600-8.300 6.800 6.600z"/><g transform="translate(-1.100 -1.300) scale(1.050)"><path fill="#05468b" d="M13.300 11.600c.4-.4 1-.4 1.300.1l.9 1.500c.2.400.1.800-.2 1.100l-.6.600c.6 1.300 1.600 2.300 2.900 2.900l.6-.6c.3-.3.700-.4 1.100-.2l1.500.9c.5.300.5.900.1 1.300l-.8.800c-.6.600-1.500.8-2.300.5-3-1.100-5.300-3.400-6.400-6.400-.3-.8-.1-1.700.5-2.300z"/></g></svg>
 <div class="abs sdiv" style="left:13px;top:272px;width:26px"></div>
 <svg style="left:16.200px;top:289px" width="24" height="24" viewBox="0 0 24 24"><path fill="#fff" d="M18 2H6c-1.100 0-2 .900-2 2v16c0 1.100.900 2 2 2h12c1.100 0 2-.900 2-2V4c0-1.100-.900-2-2-2zM10 4h5v8l-2.500-1.800L10 12V4z"/></svg>
 <svg style="left:16px;top:335px" width="23" height="23" viewBox="0 0 24 24"><path fill="#fff" d="M7 18c-1.100 0-1.990.900-1.990 2S5.900 22 7 22s2-.900 2-2-.900-2-2-2zM1 2v2h2l3.600 7.590-1.350 2.450c-.160.280-.250.610-.250.960 0 1.100.900 2 2 2h12v-2H7.420c-.140 0-.250-.110-.250-.250l.030-.120.900-1.630h7.450c.750 0 1.410-.410 1.750-1.030l3.580-6.490c.080-.140.120-.310.120-.480 0-.550-.450-1-1-1H5.210l-.940-2H1zm16 16c-1.100 0-1.990.900-1.990 2s.890 2 1.990 2 2-.900 2-2-.900-2-2-2z"/></svg>
 <div class="abs sdiv" style="left:13px;top:374px;width:26px"></div>
 <svg style="left:15.800px;top:390.800px" width="24.500" height="24.500" viewBox="0 0 24 24"><path fill="#fff" d="M12 3c-4.970 0-9 4.030-9 9s4.030 9 9 9 9-4.030 9-9c0-.460-.040-.920-.100-1.360-.980 1.370-2.580 2.260-4.400 2.260-2.980 0-5.400-2.420-5.400-5.400 0-1.810.890-3.420 2.260-4.400-.440-.060-.900-.100-1.360-.100z"/></svg>
 <svg style="left:16px;top:436.700px" width="24" height="24" viewBox="0 0 24 24"><path fill="#fff" d="M19.140 12.940c.040-.300.060-.610.060-.940 0-.320-.020-.640-.070-.940l2.030-1.580c.180-.140.230-.410.120-.610l-1.920-3.320c-.120-.220-.370-.290-.590-.220l-2.390.960c-.500-.380-1.030-.700-1.620-.940l-.360-2.540c-.040-.240-.240-.410-.480-.410h-3.840c-.240 0-.430.170-.470.410l-.360 2.540c-.590.240-1.130.570-1.620.940l-2.390-.960c-.220-.080-.470 0-.590.220L2.740 8.870c-.120.210-.080.470.120.610l2.030 1.580c-.050.300-.090.630-.090.940s.020.640.070.940l-2.030 1.580c-.180.140-.230.410-.120.610l1.920 3.320c.120.220.370.290.590.220l2.390-.960c.500.380 1.030.700 1.620.940l.360 2.540c.050.240.240.410.480.410h3.840c.240 0 .440-.170.470-.410l.360-2.540c.590-.240 1.130-.560 1.620-.940l2.390.960c.220.080.470 0 .590-.220l1.920-3.320c.120-.220.070-.470-.120-.610l-2.010-1.580zM12 15.600c-1.980 0-3.600-1.620-3.600-3.600s1.620-3.600 3.600-3.600 3.600 1.620 3.600 3.600-1.620 3.600-3.600 3.600z"/></svg>
 <!-- cards -->
 <div class="abs" style="left:66px;top:123.500px;width:685px;height:290.300px;background:#fff;border-radius:13px;box-shadow:0 2px 6px rgba(90,120,150,.35)"></div>
 <div class="abs" style="left:66px;top:429px;width:685px;height:60px;background:#fff;border-radius:13px;box-shadow:0 2px 6px rgba(90,120,150,.35)"></div>
 <div class="abs" style="left:89px;top:165px;font-size:23px;color:#222;white-space:nowrap;letter-spacing:-0.23px">Detalle del producto</div>
 <div class="abs" style="left:251px;top:214px;width:171.700px;height:170.300px;background:#fff;border:1px solid #e4e4e4;box-shadow:0 1px 5px rgba(0,0,0,.3)"></div>
 <svg style="left:266px;top:259px" width="140" height="78" viewBox="0 0 140 78"><defs><radialGradient id="pg" cx=".45" cy=".35" r=".8"><stop offset="0" stop-color="#324272"/><stop offset=".6" stop-color="#2b3864"/><stop offset="1" stop-color="#212b4e"/></radialGradient><linearGradient id="pg2" x1="0" y1="0" x2="0" y2="1"><stop offset="0" stop-color="#1d2746"/><stop offset="1" stop-color="#2c3a66"/></linearGradient><filter id="pb"><feGaussianBlur stdDeviation=".6"/></filter><g id="padshape" filter="url(#pb)"><path d="M3 36C3 22 22 8 52 4.500c26-3 52 2 70 16 12 9.500 17 19 16 27-1.500 13-16 24-36 27.500-10 1.700-20 1-26-2.500-7-4-9-9-17-12-8-3-22-2.500-32-4C13 54.500 3 47 3 36z" fill="url(#pg)"/><path d="M70 60c4-9 14-17 30-22 14-4.500 28-3 35 3 4 4 3 10 0 15.500-6 10-20 17-35 19-12 1.500-24-1-28-6.500-2-3-3-6-2-9z" fill="url(#pg2)"/><path d="M72 58c5-9 16-16 30-20 13-3.500 25-2.500 32 3" stroke="#40507f" stroke-width="2.200" fill="none" opacity=".75"/><ellipse cx="29" cy="14" rx="7" ry="2" transform="rotate(-22 29 14)" fill="#c9d2ec" opacity=".75"/></g></defs><use href="#padshape"/></svg><!--PADBIGEND-->
 <div class="abs" style="left:445px;top:212px;font-size:15.400px;line-height:22px;color:#222;white-space:nowrap;letter-spacing:-0.1px"><b style="display:inline-block;width:68.500px;font-size:15px;letter-spacing:-0.64px">Código:</b><span style="letter-spacing:-0.9px">1122019</span><br><b style="display:inline-block;width:68.500px;font-size:15px;letter-spacing:-0.64px">Producto:</b>Mousepad</div>
 <!-- scrollbar -->
 <div class="abs" style="left:760px;top:115px;width:4px;height:22px;background:#1565c0;border-radius:0 0 2px 2px"></div>
</div>
<!--POPUPEND-->
<div id="frameL" class="abs"></div>
<div class="abs" style="left:0;top:224.500px;width:1.400px;height:24.500px;background:#1a70b6"></div>
<div id="frameR" class="abs"></div>
<div class="abs" style="left:0;top:726px;width:1300px;height:5px;background:#fff"></div>
</body>
</html>
